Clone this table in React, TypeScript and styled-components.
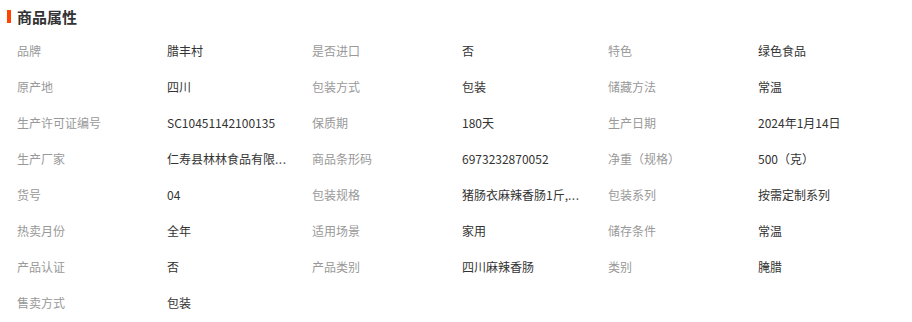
import React from "react";
import styled, { createGlobalStyle } from "styled-components";

const Global = createGlobalStyle`
  html, body { margin: 0; padding: 0; background: #fff; }
  body { font-family: "Noto Sans CJK SC", "Noto Sans", sans-serif; }
`;

const Wrap = styled.div`
  width: 912px;
  background: #fff;
`;

const Header = styled.div`
  height: 33px;
  display: flex;
  align-items: center;
  padding-left: 7px;
  gap: 6px;
`;

const Bar = styled.span`
  width: 4px;
  height: 13px;
  background: #ff4400;
  display: block;
`;

const Title = styled.h3`
  margin: 0;
  font-size: 15px;
  font-weight: 700;
  color: #333;
  line-height: 20px;
`;

const Grid = styled.div`
  display: grid;
  grid-template-columns: 150px 145px 150px 146px 150px 1fr;
  grid-auto-rows: 36px;
  padding-left: 17px;
  align-items: center;
`;

const Label = styled.div`
  font-size: 12px;
  color: #999;
  line-height: 18px;
  white-space: nowrap;
`;

const Value = styled.div`
  font-size: 12px;
  color: #333;
  line-height: 18px;
  white-space: nowrap;
`;

const Dots = styled.span`
  letter-spacing: 0.5px;
  color: #555;
`;

const items: [string, string, boolean?][] = [
  ["品牌", "腊丰村"],
  ["是否进口", "否"],
  ["特色", "绿色食品"],
  ["原产地", "四川"],
  ["包装方式", "包装"],
  ["储藏方法", "常温"],
  ["生产许可证编号", "SC10451142100135"],
  ["保质期", "180天"],
  ["生产日期", "2024年1月14日"],
  ["生产厂家", "仁寿县林林食品有限", true],
  ["商品条形码", "6973232870052"],
  ["净重（规格）", "500（克）"],
  ["货号", "04"],
  ["包装规格", "猪肠衣麻辣香肠1斤,", true],
  ["包装系列", "按需定制系列"],
  ["热卖月份", "全年"],
  ["适用场景", "家用"],
  ["储存条件", "常温"],
  ["产品认证", "否"],
  ["产品类别", "四川麻辣香肠"],
  ["类别", "腌腊"],
  ["售卖方式", "包装"],
];

export default function App() {
  return (
    <Wrap>
      <Global />
      <Header>
        <Bar />
        <Title>商品属性</Title>
      </Header>
      <Grid>
        {items.map(([k, v, more]) => (
          <React.Fragment key={k}>
            <Label>{k}</Label>
            <Value>
              {v}
              {more && <Dots>...</Dots>}
            </Value>
          </React.Fragment>
        ))}
      </Grid>
    </Wrap>
  );
}
